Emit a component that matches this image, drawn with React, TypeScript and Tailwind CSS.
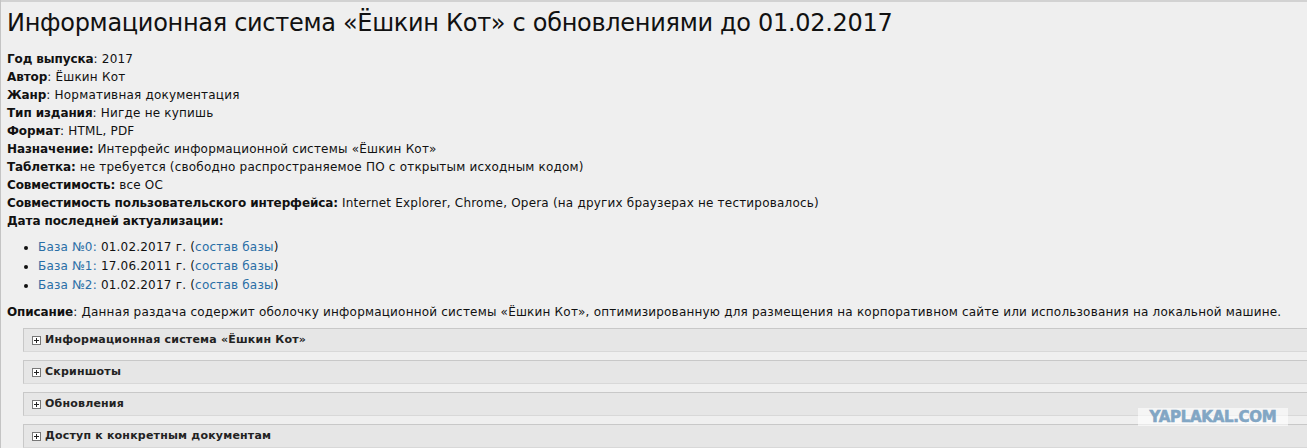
import React from 'react';

const rows: { label: string; value: string; colonInBold?: boolean }[] = [
  { label: 'Год выпуска', value: '2017' },
  { label: 'Автор', value: 'Ёшкин Кот' },
  { label: 'Жанр', value: 'Нормативная документация' },
  { label: 'Тип издания', value: 'Нигде не купишь' },
  { label: 'Формат', value: 'HTML, PDF' },
  { label: 'Назначение', value: 'Интерфейс информационной системы «Ёшкин Кот»', colonInBold: true },
  { label: 'Таблетка', value: 'не требуется (свободно распространяемое ПО с открытым исходным кодом)', colonInBold: true },
  { label: 'Совместимость', value: 'все ОС', colonInBold: true },
  {
    label: 'Совместимость пользовательского интерфейса',
    value: 'Internet Explorer, Chrome, Opera (на других браузерах не тестировалось)',
    colonInBold: true,
  },
];

const bases = [
  { name: 'База №0:', date: '01.02.2017 г.' },
  { name: 'База №1:', date: '17.06.2011 г.' },
  { name: 'База №2:', date: '01.02.2017 г.' },
];

const spoilers = [
  'Информационная система «Ёшкин Кот»',
  'Скриншоты',
  'Обновления',
  'Доступ к конкретным документам',
];

const PlusBox = () => (
  <span className="inline-flex items-center justify-center w-[9px] h-[9px] border border-[#777] bg-white mr-[4px] shrink-0">
    <svg width="7" height="7" viewBox="0 0 7 7">
      <path d="M1 3.5h5M3.5 1v5" stroke="#222" strokeWidth="1" />
    </svg>
  </span>
);

export default function App() {
  return (
    <div
      className="relative w-[1307px] h-[448px] overflow-hidden bg-[#efefef] text-[#111] border-l border-[#c4c4c4]"
      style={{ fontFamily: 'Verdana, "DejaVu Sans", sans-serif' }}
    >
      <div className="h-[3px] border-t-2 border-[#d2d2d2]" />
      <div className="pl-[6px] pr-2">
        <h1 className="text-[24px] leading-[38px] font-normal tracking-[-0.3px] text-[#111] mt-[1px]">
          Информационная система «Ёшкин Кот» с обновлениями до 01.02.2017
        </h1>
        <div className="mt-[8px] text-[12px] leading-[18px] tracking-[0.2px]">
          {rows.map((r) => (
            <div key={r.label}>
              <b className="tracking-[-0.1px]">{r.label}{r.colonInBold ? ':' : ''}</b>
              {r.colonInBold ? ' ' : ': '}
              {r.value}
            </div>
          ))}
          <div>
            <b className="tracking-[-0.1px]">Дата последней актуализации:</b>
          </div>
          <ul className="list-disc pl-[31px] mt-[8px] mb-[8px] leading-[19px]">
            {bases.map((b) => (
              <li key={b.name}>
                <span className="text-[#2a6ea6]">{b.name}</span> {b.date} (
                <span className="text-[#2a6ea6]">состав базы</span>)
              </li>
            ))}
          </ul>
          <div>
            <b className="tracking-[-0.1px]">Описание</b>: Данная раздача содержит оболочку информационной системы «Ёшкин Кот», оптимизированную для
            размещения на корпоративном сайте или использования на локальной машине.
          </div>
        </div>
        <div className="ml-[16px] mt-[7px] flex flex-col gap-[8px] mr-[-10px]">
          {spoilers.map((s) => (
            <div
              key={s}
              className="h-[24px] flex items-center pl-[8px] bg-[#e6e6e6] border-t border-l border-[#c8c8c8] border-b border-b-[#d8d8d8] text-[11px] tracking-[0.2px] font-bold text-[#222]"
            >
              <PlusBox />
              {s}
            </div>
          ))}
        </div>
      </div>
      <div
        className="absolute left-[1137px] top-[408px] w-[150px] h-[18px] flex items-center justify-center bg-white/60 text-[#82a6c4] text-[15px] font-bold leading-none tracking-[-0.3px]"
        style={{ fontFamily: '"DejaVu Sans", sans-serif', WebkitTextStroke: '0.6px #82a6c4' }}
      >
        YAPLAKAL.COM
      </div>
    </div>
  );
}
